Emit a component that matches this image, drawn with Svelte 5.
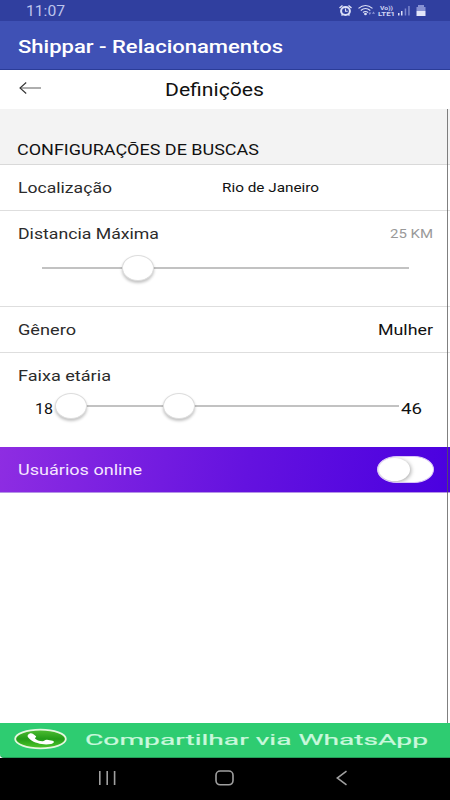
<script lang="ts">
	let distance = $state(25);
	let ageMin = $state(18);
	let ageMax = $state(46);
	let online = $state(false);
</script>

<!-- Fixed-width label: glyphs are stretched to the given width, baseline at 15 -->
{#snippet label(text: string, width: number, cls: string)}
	<svg class="label {cls}" {width} height="20">
		<text x="0" y="15" textLength={width} lengthAdjust="spacingAndGlyphs">{text}</text>
	</svg>
{/snippet}

<div class="screen">
	<div class="status">
		{@render label('11:07', 39, 'clock')}
		<svg class="status-icons" width="90" height="21" viewBox="0 0 90 21">
			<g fill="none" stroke="#dce0f7">
				<ellipse cx="7.5" cy="11" rx="4.4" ry="4" stroke-width="2" />
				<path d="M1.5 8 4.5 5.5M13.5 8 10.5 5.5M3.5 15.5 5 14M11.5 15.5 10 14" stroke-width="1.5" />
				<path d="M7.5 8.5V11.3H9.7" stroke-width="1.1" />
				<path d="M20.5 8.4Q27.5 2.6 34.5 8.4M22.8 10.5Q27.5 6.5 32.3 10.5M25 12.5Q27.5 10.5 30 12.5" stroke-width="1.2" />
			</g>
			<ellipse cx="27.5" cy="14" rx="1.4" ry="1.2" fill="#dce0f7" />
			<path d="M30.3 12.5h3l-1.5 2.4zM34 13.8h3l-1.5-2.4z" fill="#8d97d5" />
			<g class="lte">
				<text x="42" y="9.5" textLength="13" lengthAdjust="spacingAndGlyphs">Vo))</text>
				<text x="40" y="16.3" textLength="17" lengthAdjust="spacingAndGlyphs">LTE1</text>
			</g>
			<path d="M60 13h1.5v2.5H60zM63 11h1.5v4.5H63z" fill="#dce0f7" />
			<path d="M66.7 8.5h1.5v7h-1.5zM70.2 6h1.5v9.5h-1.5z" fill="#7d88cf" />
			<path d="M80 5h6v2h1.5v4h-9V7H80z" fill="#8791d3" />
			<path d="M78.5 11h9v5h-9z" fill="#e3e6fa" />
		</svg>
	</div>

	<div class="app-bar">{@render label('Shippar - Relacionamentos', 265, 'app-title')}</div>

	<header>
		<svg class="back" width="22" height="14" viewBox="0 0 22 14">
			<path d="M1 7H22" stroke="#777" stroke-width="1.2" />
			<path d="M7.2 1.5 1 7 7.2 12.5" fill="none" stroke="#333" stroke-width="1.1" />
		</svg>
		{@render label('Definições', 99, 'page-title')}
	</header>

	<main>
		<div class="section">{@render label('CONFIGURAÇÕES DE BUSCAS', 242, 'heading')}</div>

		<div class="row">
			{@render label('Localização', 94, '')}
			{@render label('Rio de Janeiro', 97, 'city')}
		</div>

		<div class="row distance">
			<div class="line">
				{@render label('Distancia Máxima', 141, '')}
				{@render label(`${distance} KM`, 43, 'muted')}
			</div>
			<div class="track">
				<span class="knob" style:margin-left="{distance * 0.875}%"></span>
			</div>
		</div>

		<div class="row">
			{@render label('Gênero', 58, '')}
			{@render label('Mulher', 55, 'dark')}
		</div>

		<div class="row age">
			{@render label('Faixa etária', 93, '')}
			<div class="range">
				{@render label(`${ageMin}`, 18, 'num')}
				<div class="track">
					<span class="knob"></span>
					<span class="knob second"></span>
				</div>
				{@render label(`${ageMax}`, 21, 'num')}
			</div>
		</div>

		<div class="row online">
			{@render label('Usuários online', 124, 'light')}
			<button
				type="button"
				class="toggle"
				class:on={online}
				aria-label="Usuários online"
				onclick={() => (online = !online)}
			>
				<span></span>
			</button>
		</div>
		<div class="scrollbar"></div>
	</main>

	<div class="share">
		<svg width="54" height="22" viewBox="0 0 54 22">
			<defs>
				<linearGradient id="phone" x2="0" y2="1">
					<stop offset="0" stop-color="#4fbd32" />
					<stop offset=".5" stop-color="#239c18" />
					<stop offset="1" stop-color="#4fc82b" />
				</linearGradient>
			</defs>
			<ellipse cx="27.5" cy="11" rx="25.3" ry="9.3" fill="url(#phone)" stroke="#e5f7df" stroke-width="1.8" />
			<path
				d="M15 6.8C16.5 5 18.5 4.7 20.5 6.2L23 8.2C23.8 9.2 21.6 9.5 22 10.4 23.5 12 26 13 29.5 13.2 31.5 13.3 31.6 11.6 34 11.8L39.5 12.7C42 13.5 41 15.2 38 16 31 17.5 22 15.3 17.5 11.8 15 9.8 13.8 8.3 15 6.8Z"
				fill="#fff"
			/>
		</svg>
		{@render label('Compartilhar via WhatsApp', 343, 'share-text')}
	</div>

	<nav>
		<svg width="18" height="16" viewBox="0 0 18 16">
			<path d="M1.8 1v14M9.2 1v14M16.6 1v14" />
		</svg>
		<svg width="20" height="16" viewBox="0 0 20 16">
			<rect x="1" y="1" width="17" height="13.8" rx="4.2" />
		</svg>
		<svg width="12" height="16" viewBox="0 0 12 16">
			<path d="M10.5 1.2 1.2 8l9.3 6.8" />
		</svg>
	</nav>
</div>

<style>
	:global(body) {
		margin: 0;
	}
	.screen {
		width: 450px;
		height: 800px;
		display: flex;
		flex-direction: column;
		overflow: hidden;
		background: #fff;
		font-family: Roboto, sans-serif;
	}
	.screen * {
		box-sizing: border-box;
	}
	svg {
		display: block;
		flex: none;
	}
	.label {
		overflow: visible;
		font-size: 14px;
		fill: #2b2b2b;
	}
	.status {
		height: 21px;
		flex: none;
		display: flex;
		justify-content: space-between;
		padding: 0 22px 0 26px;
		background: #303f9f;
	}
	.clock {
		margin-top: 1px;
		fill: #bcc3ec;
	}
	.lte {
		font-size: 5.8px;
		font-weight: 700;
		fill: #d0d5f3;
	}
	.app-bar {
		height: 49px;
		flex: none;
		padding: 17px 18px 0;
		background: #3f51b5;
		border-bottom: 1px solid #2b3c98;
	}
	.app-title {
		font-size: 18px;
		font-weight: 500;
		fill: #fff;
	}
	header {
		height: 39px;
		flex: none;
		display: flex;
		align-items: flex-start;
		padding: 11px 19px 0;
	}
	.back {
		margin-right: 124px;
	}
	.page-title {
		font-size: 17.5px;
		fill: #111;
	}
	main {
		position: relative;
		flex: 1;
		min-height: 0;
	}
	.section {
		height: 56px;
		padding: 31px 17px 0;
		background: #f3f3f3;
		border-bottom: 1px solid #d9d9d9;
	}
	.heading {
		fill: #111;
	}
	.row {
		height: 46px;
		display: flex;
		justify-content: space-between;
		padding: 13px 17px 0 18px;
		border-bottom: 1px solid #dedede;
	}
	.city {
		margin: -1px 114px 0 0;
		font-size: 13px;
		fill: #111;
	}
	.row.distance {
		height: 96px;
		display: block;
	}
	.line {
		display: flex;
		justify-content: space-between;
	}
	.muted {
		margin-top: -1px;
		font-size: 13px;
		fill: #999;
	}
	.track {
		height: 2px;
		display: flex;
		align-items: center;
		background: #c2c2c2;
	}
	.distance .track {
		margin: 23px 24px 0;
	}
	.knob {
		width: 32px;
		height: 26px;
		flex: none;
		border-radius: 50%;
		background: #fff;
		border: 1px solid #ddd;
		box-shadow: 0 2px 3px rgba(0, 0, 0, 0.24);
	}
	.dark,
	.num {
		fill: #111;
	}
	.num {
		margin-top: 1px;
	}
	.row.age {
		height: 94px;
		display: block;
		border: none;
	}
	.range {
		display: flex;
		margin: 12px 11px 0 17px;
	}
	.range .track {
		flex: 1;
		margin: 7px 2px 0;
	}
	.knob.second {
		margin-left: 76px;
	}
	.row.online {
		height: 46px;
		padding: 12px 16px 0 18px;
		border: none;
		border-bottom: 1px solid #b493e6;
		background: linear-gradient(100deg, #8e2de2, #6412df 55%, #4a00e0);
	}
	.light {
		margin-top: 1px;
		fill: #f5e6ff;
	}
	.toggle {
		width: 57px;
		height: 27px;
		margin-top: -3px;
		padding: 1px;
		border: 1px solid #d9c6f7;
		border-radius: 20px / 13.5px;
		background: #fff;
		overflow: hidden;
	}
	.toggle span {
		display: block;
		width: 31px;
		height: 23px;
		border-radius: 50%;
		background: #fff;
		box-shadow: 1px 1px 4px rgba(0, 0, 0, 0.35);
	}
	.toggle.on span {
		margin-left: 22px;
	}
	.scrollbar {
		position: absolute;
		top: 0;
		bottom: 0;
		right: 2px;
		width: 1px;
		background: rgba(85, 85, 85, 0.75);
	}
	.share {
		height: 35px;
		flex: none;
		display: flex;
		align-items: flex-start;
		padding: 5px 0 0 13px;
		background: #2ecc71;
		border-bottom: 1px solid #249c58;
		border-bottom-left-radius: 4px;
	}
	.share-text {
		margin: 2px 0 0 18px;
		fill: #c9f8dc;
		stroke: #c9f8dc;
		stroke-width: 0.2;
	}
	nav {
		height: 42px;
		flex: none;
		display: flex;
		padding: 12px 0 0 98px;
		background: #000;
	}
	nav svg {
		fill: none;
		stroke: #a0a0a0;
		stroke-width: 1.6;
	}
	nav svg:nth-child(2) {
		margin: 0 101px 0 99px;
	}
</style>
